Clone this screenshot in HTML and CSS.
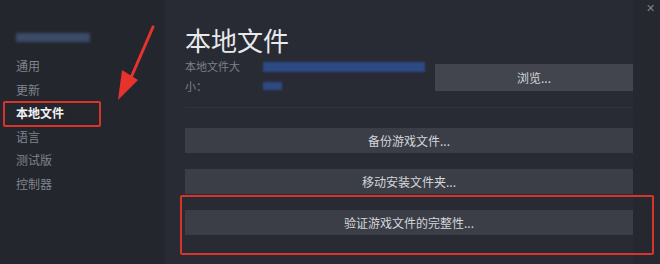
FILE: index.html
```html
<!DOCTYPE html>
<html lang="zh">
<head>
<meta charset="utf-8">
<link rel="stylesheet" href="styles.css">
</head>
<body>
<div class="window">
  <aside class="sidebar">
    <div class="blur-title"></div>
    <ul class="nav">
      <li>通用</li>
      <li>更新</li>
      <li class="active">本地文件</li>
      <li>语言</li>
      <li>测试版</li>
      <li>控制器</li>
    </ul>
  </aside>
  <main class="main">
    <div class="content">
      <h1 class="title">本地文件</h1>
      <div class="size-row">
        <div class="size-label">本地文件大<br>小：</div>
        <div class="size-value">
          <div class="blur-bar long"></div>
          <div class="blur-bar short"></div>
        </div>
        <button class="btn browse">浏览...</button>
      </div>
      <div class="actions">
        <button class="btn">备份游戏文件...</button>
        <button class="btn">移动安装文件夹...</button>
        <button class="btn">验证游戏文件的完整性...</button>
      </div>
    </div>
    <div class="gutter">
      <span class="close">✕</span>
    </div>
  </main>
  <div class="highlight-box"></div>
  <svg class="arrow" width="60" height="110" viewBox="0 0 60 110">
    <line x1="35" y1="27" x2="12" y2="80" stroke="#e8322c" stroke-width="3" stroke-linecap="round"/>
    <polygon points="0,100 4,70 20,80" fill="#e8322c"/>
  </svg>
</div>
</body>
</html>
```
FILE: styles.css
```css
* { box-sizing: border-box; }
html, body {
  margin: 0;
  padding: 0;
  width: 660px;
  height: 264px;
  overflow: hidden;
  background: #282b33;
  font-family: "Noto Sans CJK SC", "Noto Sans", sans-serif;
}
.window {
  position: relative;
  display: flex;
  width: 660px;
  height: 264px;
}
.sidebar {
  width: 165px;
  flex: none;
  background: #23262d;
  padding-top: 33px;
}
.blur-title {
  margin-left: 16px;
  width: 74px;
  height: 9px;
  background: #3b4b68;
  filter: blur(1.5px);
}
.nav {
  list-style: none;
  margin: 12px 0 0;
  padding: 0;
}
.nav li {
  position: relative;
  height: 23.6px;
  line-height: 23.6px;
  padding-left: 16px;
  font-size: 12px;
  color: #80848d;
}
.nav li.active {
  color: #f2f2f2;
  font-weight: bold;
}
.nav li.active::after {
  content: "";
  position: absolute;
  left: 3px;
  top: 0;
  width: 94px;
  height: 22px;
  border: 2px solid #d9342c;
  border-radius: 2px;
}
.main {
  flex: 1;
  display: flex;
}
.content {
  flex: 1;
  padding: 23px 0 0 20px;
  background: #282b33;
}
.title {
  margin: 0;
  font-size: 26px;
  font-weight: normal;
  line-height: 34px;
  color: #e8e9eb;
}
.size-row {
  display: flex;
  align-items: flex-start;
  margin-top: -1px;
  padding-bottom: 11px;
  border-bottom: 1px solid #30333b;
}
.size-label {
  width: 78px;
  font-size: 11px;
  line-height: 20px;
  color: #7d818a;
}
.size-value {
  width: 172px;
  padding-top: 6px;
}
.blur-bar {
  background: #2e4a85;
  filter: blur(1px);
}
.blur-bar.long { width: 162px; height: 10px; }
.blur-bar.short { width: 19px; height: 8px; margin-top: 10px; }
.btn {
  display: block;
  border: none;
  margin: 0;
  padding: 0;
  font-family: inherit;
  font-size: 12px;
  color: #d4d6da;
  background: #3b3e47;
  text-align: center;
}
.browse {
  width: 198px;
  height: 27px;
  margin-top: 8px;
  background: #42454e;
}
.actions {
  display: flex;
  flex-direction: column;
  gap: 16px;
  padding-top: 20px;
}
.actions .btn {
  width: 448px;
  height: 25px;
}
.gutter {
  width: 27px;
  flex: none;
  background: #25282f;
  position: relative;
}
.close {
  position: absolute;
  right: 5px;
  top: 1px;
  font-size: 11px;
  color: #7f838b;
  line-height: 13px;
}
.highlight-box {
  position: absolute;
  left: 180px;
  top: 195px;
  width: 474px;
  height: 60px;
  border: 2px solid #d9342c;
  border-radius: 2px;
}
.arrow {
  position: absolute;
  left: 118px;
  top: 0;
}
```
